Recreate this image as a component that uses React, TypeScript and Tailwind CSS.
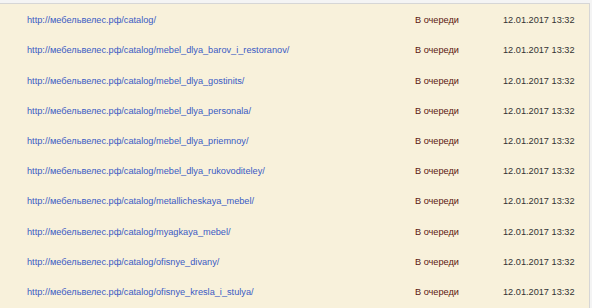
const rows = [
  "http://мебельвелес.рф/catalog/",
  "http://мебельвелес.рф/catalog/mebel_dlya_barov_i_restoranov/",
  "http://мебельвелес.рф/catalog/mebel_dlya_gostinits/",
  "http://мебельвелес.рф/catalog/mebel_dlya_personala/",
  "http://мебельвелес.рф/catalog/mebel_dlya_priemnoy/",
  "http://мебельвелес.рф/catalog/mebel_dlya_rukovoditeley/",
  "http://мебельвелес.рф/catalog/metallicheskaya_mebel/",
  "http://мебельвелес.рф/catalog/myagkaya_mebel/",
  "http://мебельвелес.рф/catalog/ofisnye_divany/",
  "http://мебельвелес.рф/catalog/ofisnye_kresla_i_stulya/",
];

export default function App() {
  return (
    <div className="w-[592px] h-[308px] overflow-hidden bg-[#f4f4f4] pt-[3px] font-['Liberation_Sans',Arial,sans-serif] text-[9.2px]">
      <div className="h-full w-[590px] bg-[#f8f1db] border-t border-r border-[#d6d6d6] pt-[2px]">
        {rows.map((url) => (
          <div key={url} className="flex items-center h-[30.2px]">
            <a href="#" className="ml-[27px] w-[388px] text-[#3a5ac4] no-underline">
              {url}
            </a>
            <span className="w-[88px] text-[#5b1710]">В очереди</span>
            <span className="text-[#333333]">12.01.2017 13:32</span>
          </div>
        ))}
      </div>
    </div>
  );
}
